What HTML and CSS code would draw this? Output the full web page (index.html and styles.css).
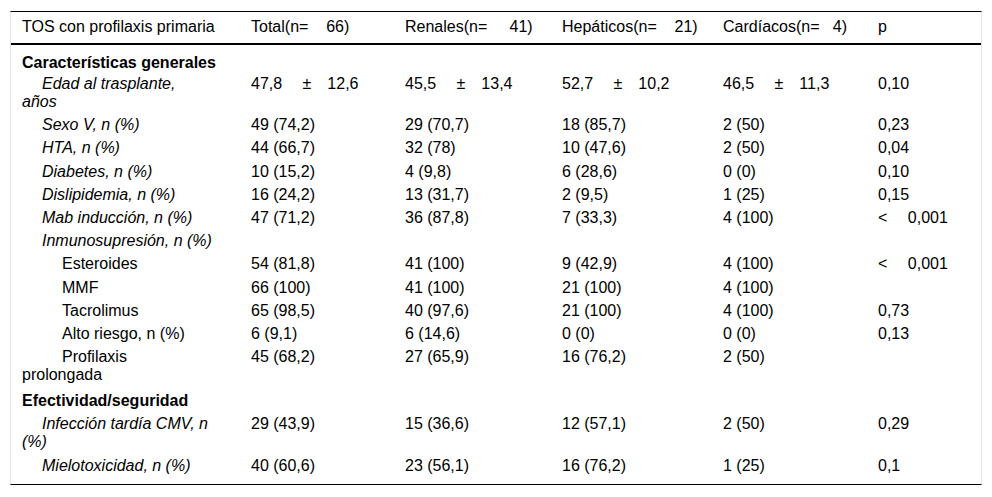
FILE: index.html
```html
<!DOCTYPE html>
<html lang="es">
<head>
<meta charset="utf-8">
<title>TOS con profilaxis primaria</title>
<link rel="stylesheet" href="styles.css">
</head>
<body>
<div class="table-wrap">
<table class="data">
<colgroup>
<col class="c-label"><col class="c-total"><col class="c-ren"><col class="c-hep"><col class="c-car"><col class="c-p">
</colgroup>
<thead>
<tr>
<th>TOS con profilaxis primaria</th>
<th>Total(n=&nbsp;&nbsp;&nbsp;&nbsp;66)</th>
<th>Renales(n=&nbsp;&nbsp;&nbsp;&nbsp;&nbsp;41)</th>
<th>Hepáticos(n=&nbsp;&nbsp;&nbsp;&nbsp;21)</th>
<th>Cardíacos(n=&nbsp;&nbsp;&nbsp;4)</th>
<th>p</th>
</tr>
</thead>
<tbody>
<tr class="section first"><td class="lbl" colspan="6"><b>Características generales</b></td></tr>
<tr><td class="lbl l1 it">Edad al trasplante,<br>años</td><td>47,8&emsp;&nbsp;±&emsp;12,6</td><td>45,5&emsp;&nbsp;±&emsp;13,4</td><td>52,7&emsp;&nbsp;±&emsp;10,2</td><td>46,5&emsp;&nbsp;±&emsp;11,3</td><td>0,10</td></tr>
<tr><td class="lbl l1 it">Sexo V, n (%)</td><td>49 (74,2)</td><td>29 (70,7)</td><td>18 (85,7)</td><td>2 (50)</td><td>0,23</td></tr>
<tr><td class="lbl l1 it">HTA, n (%)</td><td>44 (66,7)</td><td>32 (78)</td><td>10 (47,6)</td><td>2 (50)</td><td>0,04</td></tr>
<tr><td class="lbl l1 it">Diabetes, n (%)</td><td>10 (15,2)</td><td>4 (9,8)</td><td>6 (28,6)</td><td>0 (0)</td><td>0,10</td></tr>
<tr><td class="lbl l1 it">Dislipidemia, n (%)</td><td>16 (24,2)</td><td>13 (31,7)</td><td>2 (9,5)</td><td>1 (25)</td><td>0,15</td></tr>
<tr><td class="lbl l1 it">Mab inducción, n (%)</td><td>47 (71,2)</td><td>36 (87,8)</td><td>7 (33,3)</td><td>4 (100)</td><td>&lt;&emsp;&nbsp;0,001</td></tr>
<tr><td class="lbl l1 it">Inmunosupresión, n (%)</td><td></td><td></td><td></td><td></td><td></td></tr>
<tr><td class="lbl l2">Esteroides</td><td>54 (81,8)</td><td>41 (100)</td><td>9 (42,9)</td><td>4 (100)</td><td>&lt;&emsp;&nbsp;0,001</td></tr>
<tr><td class="lbl l2">MMF</td><td>66 (100)</td><td>41 (100)</td><td>21 (100)</td><td>4 (100)</td><td></td></tr>
<tr><td class="lbl l2">Tacrolimus</td><td>65 (98,5)</td><td>40 (97,6)</td><td>21 (100)</td><td>4 (100)</td><td>0,73</td></tr>
<tr><td class="lbl l2">Alto riesgo, n (%)</td><td>6 (9,1)</td><td>6 (14,6)</td><td>0 (0)</td><td>0 (0)</td><td>0,13</td></tr>
<tr><td class="lbl l2">Profilaxis<br>prolongada</td><td>45 (68,2)</td><td>27 (65,9)</td><td>16 (76,2)</td><td>2 (50)</td><td></td></tr>
<tr class="section"><td class="lbl" colspan="6"><b>Efectividad/seguridad</b></td></tr>
<tr><td class="lbl l1 it">Infección tardía CMV, n<br>(%)</td><td>29 (43,9)</td><td>15 (36,6)</td><td>12 (57,1)</td><td>2 (50)</td><td>0,29</td></tr>
<tr class="last"><td class="lbl l1 it">Mielotoxicidad, n (%)</td><td>40 (60,6)</td><td>23 (56,1)</td><td>16 (76,2)</td><td>1 (25)</td><td>0,1</td></tr>
</tbody>
</table>
</div>
</body>
</html>
```
FILE: styles.css
```css
html, body {
  margin: 0;
  background: #fff;
}
body {
  padding: 11px 10px 0 10px;
  font-family: "Liberation Sans", Arial, sans-serif;
  font-size: 16px;
  color: #000;
}
.table-wrap {
  border-top: 1px solid #000;
  border-bottom: 1px solid #000;
  border-left: 1px solid #e4e4e4;
  border-right: 1px solid #e4e4e4;
}
.data {
  width: 100%;
  table-layout: fixed;
  border-collapse: separate;
  border-spacing: 0;
  line-height: 18.2px;
}
.c-label { width: 229px; }
.c-total { width: 154px; }
.c-ren { width: 157px; }
.c-hep { width: 161px; }
.c-car { width: 155px; }
.c-p { width: 114px; }

.data th,
.data td {
  padding: 2.5px 11px;
  text-align: left;
  vertical-align: top;
  white-space: nowrap;
}
.data th {
  font-weight: normal;
  padding-top: 6px;
  padding-bottom: 6.8px;
  border-bottom: 2px solid #000;
}
.l1 { text-indent: 20px; }
.l2 { text-indent: 40px; }
.it { font-style: italic; }

.section td { padding-top: 5px; padding-bottom: 2.5px; }
.section.first td { padding-top: 9px; padding-bottom: 0; }
.last td { padding-bottom: 9.3px; }
```
